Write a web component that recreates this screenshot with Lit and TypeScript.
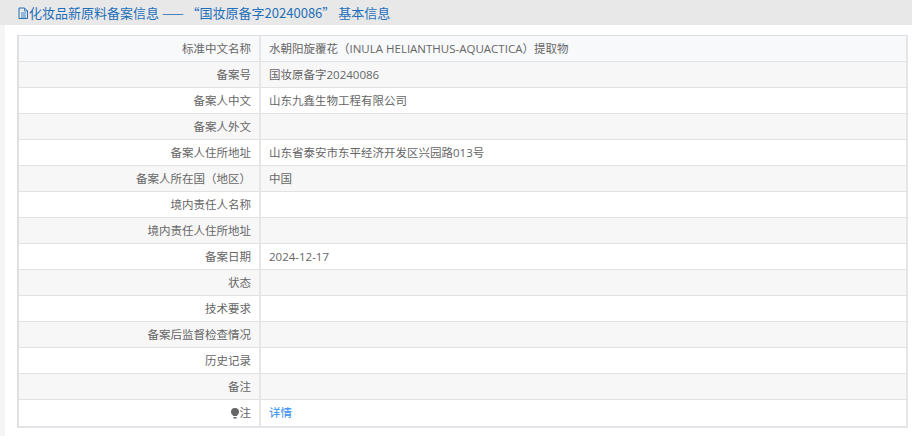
import { LitElement, html, css } from "lit";
import { customElement } from "lit/decorators.js";

const rows: [string, string][] = [
  ["标准中文名称", "水朝阳旋覆花（INULA HELIANTHUS-AQUACTICA）提取物"],
  ["备案号", "国妆原备字20240086"],
  ["备案人中文", "山东九鑫生物工程有限公司"],
  ["备案人外文", ""],
  ["备案人住所地址", "山东省泰安市东平经济开发区兴园路013号"],
  ["备案人所在国（地区）", "中国"],
  ["境内责任人名称", ""],
  ["境内责任人住所地址", ""],
  ["备案日期", "2024-12-17"],
  ["状态", ""],
  ["技术要求", ""],
  ["备案后监督检查情况", ""],
  ["历史记录", ""],
  ["备注", ""],
];

@customElement("app-root")
export class AppRoot extends LitElement {
  static styles = css`
    :host {
      display: block;
      width: 912px;
      height: 436px;
      overflow: hidden;
      background: #f5f5f5;
      font-family: "Open Sans", "Noto Sans CJK SC", sans-serif;
      font-size: 11.5px;
      color: #666;
    }
    .head {
      height: 25px;
      background: #e8e8e8;
      display: flex;
      align-items: center;
      padding-left: 17px;
      color: #1f6fb8;
      font-size: 13px;
      font-family: "Noto Sans CJK SC", sans-serif;
      line-height: 25px;
    }
    .head svg {
      width: 12px;
      height: 12px;
      flex: none;
    }
    .panel {
      margin-left: 5px;
      background: #fff;
      padding: 10px 4px 0 12px;
      height: 411px;
      box-sizing: border-box;
    }
    .table {
      display: grid;
      grid-template-columns: 242px 1fr;
      border: 1px solid #e3e3e3;
      border-width: 1px 2px 2px 2px;
      border-color: #dedede #e6e6e6 #e4e4e8 #e0e0e0;
    }
    .row {
      display: contents;
    }
    .cell {
      height: 25px;
      line-height: 25px;
      border-bottom: 1px solid #e2e2e2;
      white-space: nowrap;
    }
    .row:last-child .cell {
      border-bottom: none;
      height: 26px;
    }
    .k {
      text-align: right;
      padding-right: 8px;
      border-right: 2px solid #e6e6e6;
      box-sizing: content-box;
    }
    .v {
      padding-left: 8px;
    }
    .even .cell {
      background: #f7f7f7;
    }
    .first .cell {
      background: #f8f9fb;
    }
    a {
      color: #2d8cf0;
      text-decoration: none;
    }
    .bulb {
      width: 10px;
      height: 11px;
      vertical-align: -2px;
    }
    .k {
      width: 232px;
    }
  `;

  render() {
    return html`
      <div class="head">
        <svg viewBox="0 0 12 12" fill="none" stroke="#1f6fb8" stroke-width="1">
          <path d="M2 1h5.5L10.5 4v7.5H2z" />
          <path d="M7.5 1v3h3M4 6h5M4 8h5M4 10h5" stroke-width="0.8" />
        </svg>
        <span>化妆品新原料备案信息 —— “国妆原备字20240086” 基本信息</span>
      </div>
      <div class="panel">
        <div class="table">
          ${rows.map(
            ([k, v], i) => html`
              <div class="row ${i === 0 ? "first" : i % 2 === 1 ? "even" : ""}">
                <div class="cell k">${k}</div>
                <div class="cell v">${v}</div>
              </div>
            `
          )}
          <div class="row">
            <div class="cell k">
              <svg class="bulb" viewBox="0 0 10 11" fill="#666">
                <path d="M5 0a4 4 0 0 1 4 4c0 1.8-1.4 2.6-2 4H3.200C2.600 6.600 1 5.800 1 4a4 4 0 0 1 4-4z" />
                <rect x="3.500" y="9" width="3" height="1.500" />
              </svg>注
            </div>
            <div class="cell v"><a href="#">详情</a></div>
          </div>
        </div>
      </div>
    `;
  }
}
